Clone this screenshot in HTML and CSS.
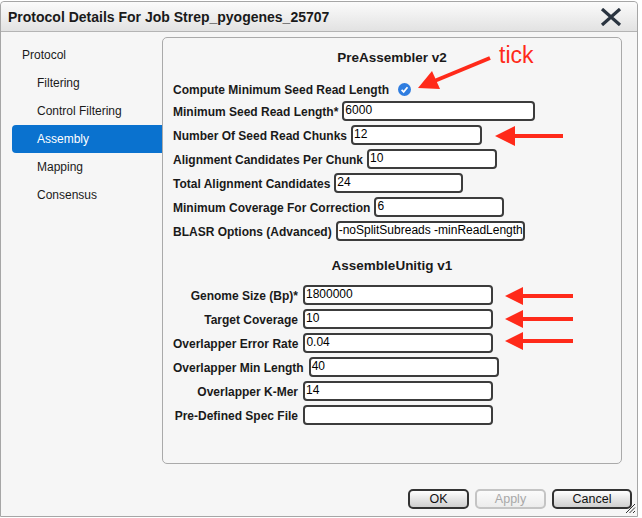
FILE: index.html
```html
<!DOCTYPE html>
<html>
<head>
<meta charset="utf-8">
<link rel="stylesheet" href="styles.css">
</head>
<body>
<div class="window">
  <div class="titlebar">
    <span class="title">Protocol Details For Job Strep_pyogenes_25707</span>
    <svg class="close" width="22" height="18" viewBox="0 0 22 18"><path d="M2 1 L20 17 M20 1 L2 17" stroke="#2a3440" stroke-width="3.2" stroke-linecap="butt"/></svg>
  </div>
  <div class="main">
    <ul class="sidebar">
      <li class="top">Protocol</li>
      <li>Filtering</li>
      <li>Control Filtering</li>
      <li class="selected">Assembly</li>
      <li>Mapping</li>
      <li>Consensus</li>
    </ul>
    <div class="panel">
      <div class="heading">PreAssembler v2</div>
      <div class="row first">
        <span class="label">Compute Minimum Seed Read Length</span>
        <span class="check"><svg width="13" height="13" viewBox="0 0 13 13"><circle cx="6.5" cy="6.5" r="6.5" fill="#2f7de0"/><path d="M3.6 6.8 L5.7 8.9 L9.5 4.3" fill="none" stroke="#fff" stroke-width="1.7"/></svg></span>
      </div>
      <div class="row"><span class="label">Minimum Seed Read Length*</span><span class="input w193">6000</span></div>
      <div class="row"><span class="label">Number Of Seed Read Chunks</span><span class="input w131">12</span></div>
      <div class="row"><span class="label">Alignment Candidates Per Chunk</span><span class="input w130">10</span></div>
      <div class="row"><span class="label">Total Alignment Candidates</span><span class="input w129">24</span></div>
      <div class="row"><span class="label">Minimum Coverage For Correction</span><span class="input w130">6</span></div>
      <div class="row"><span class="label">BLASR Options (Advanced)</span><span class="input w189">-noSplitSubreads -minReadLength</span></div>

      <div class="heading second">AssembleUnitig v1</div>
      <div class="grid">
        <div class="row"><span class="label right">Genome Size (Bp)*</span><span class="input w190">1800000</span></div>
        <div class="row"><span class="label right">Target Coverage</span><span class="input w190">10</span></div>
        <div class="row"><span class="label right">Overlapper Error Rate</span><span class="input w190">0.04</span></div>
        <div class="row"><span class="label right">Overlapper Min Length</span><span class="input w190">40</span></div>
        <div class="row"><span class="label right">Overlapper K-Mer</span><span class="input w190">14</span></div>
        <div class="row"><span class="label right">Pre-Defined Spec File</span><span class="input w190"></span></div>
      </div>
    </div>
  </div>
  <div class="footer">
    <button class="btn ok">OK</button>
    <button class="btn apply" disabled>Apply</button>
    <button class="btn cancel">Cancel</button>
  </div>
  <svg class="grip" width="12" height="12" viewBox="0 0 12 12"><path d="M11 2 L2 11 M11 5.5 L5.5 11 M11 9 L9 11" stroke="#333" stroke-width="1"/></svg>
  <div class="annot">
    <span class="tick">tick</span>
    <svg width="638" height="516" viewBox="0 0 638 516">
      <g stroke="#ff2a1a" stroke-width="4" fill="#ff2a1a">
        <line x1="490" y1="57" x2="432" y2="81"/>
        <polygon points="418,87 432,70 440,88" stroke="none"/>
        <line x1="563" y1="135" x2="512" y2="135"/>
        <polygon points="495,135 515,125 515,145" stroke="none"/>
        <line x1="573" y1="295" x2="520" y2="295"/>
        <polygon points="505,295 523,286 523,304" stroke="none"/>
        <line x1="573" y1="318" x2="520" y2="318"/>
        <polygon points="505,318 523,309 523,327" stroke="none"/>
        <line x1="573" y1="340" x2="520" y2="340"/>
        <polygon points="505,340 523,331 523,349" stroke="none"/>
      </g>
    </svg>
  </div>
</div>
</body>
</html>
```

FILE: styles.css
```css
* { box-sizing: border-box; }
html, body { margin: 0; padding: 0; background: #ffffff; }
body { font-family: "Liberation Sans", Arial, sans-serif; font-size: 12px; color: #111; }

.window {
  position: relative;
  margin-top: 1px;
  width: 638px;
  height: 516px;
  background: #f6f6f6;
  border: 1px solid #a6a6a6;
  border-radius: 4px 4px 0 0;
  display: flex;
  flex-direction: column;
}

.titlebar {
  height: 30px;
  flex: none;
  display: flex;
  align-items: center;
  justify-content: space-between;
  padding: 1px 15px 0 7px;
  background: linear-gradient(#fbfbfb, #e2e2e2);
  border-bottom: 1px solid #b4b4b4;
  border-radius: 4px 4px 0 0;
}
.title { font-weight: bold; font-size: 14px; color: #1a1a1a; }
.close { display: block; }

.main {
  display: flex;
  padding-top: 5px;
  flex: none;
}

.sidebar {
  list-style: none;
  margin: 4px 0 0 11px;
  padding: 0;
  width: 150px;
  flex: none;
}
.sidebar li {
  height: 28px;
  line-height: 28px;
  padding-left: 25px;
  color: #1a1a1a;
}
.sidebar li.top { padding-left: 10px; }
.sidebar li.selected {
  background: #0a72cf;
  color: #fff;
  border-radius: 4px 0 0 4px;
}

.panel {
  width: 460px;
  height: 427px;
  border: 1px solid #aaaaaa;
  border-radius: 5px;
  padding: 10px 10px 0 10px;
}

.heading {
  text-align: center;
  font-weight: bold;
  font-size: 13.5px;
  line-height: 20px;
  margin-bottom: 11px;
  color: #1a1a1a;
}
.heading.second { margin-top: 15px; margin-bottom: 9px; }

.row {
  display: flex;
  align-items: center;
  height: 20px;
  margin-bottom: 4px;
}
.row.first { margin-bottom: 2px; }

.label {
  font-weight: bold;
  font-size: 12px;
  color: #1a1a1a;
  margin-right: 4px;
  white-space: nowrap;
  padding-top: 2px;
}
.label.right {
  min-width: 125px;
  text-align: right;
  margin-right: 5px;
}

.check { display: flex; margin-left: 5px; }

.input {
  display: block;
  height: 20px;
  background: #fff;
  border: 2px solid #3c3c3c;
  border-radius: 4px;
  padding: 0 1px;
  font-size: 12px;
  line-height: 14px;
  color: #000;
  white-space: nowrap;
  overflow: hidden;
}
.w193 { width: 193px; }
.w131 { width: 131px; }
.w130 { width: 130px; }
.w129 { width: 129px; }
.w189 { width: 189px; }
.w190 { width: 190px; }

.footer {
  display: flex;
  justify-content: flex-end;
  gap: 6px;
  padding: 25px 5px 0 0;
}
.btn {
  height: 20px;
  border: 2px solid #333;
  border-radius: 5px;
  background: linear-gradient(#ffffff, #e6e6e6 50%, #cfcfcf);
  font-family: "Liberation Sans", Arial, sans-serif;
  font-size: 12.5px;
  color: #111;
  padding: 0;
  line-height: 16px;
}
.btn.ok { width: 61px; }
.btn.apply { width: 71px; border-color: #c4c4c4; color: #a8a8a8; background: linear-gradient(#fbfbfb, #ececec); }
.btn.cancel { width: 80px; }

.grip { position: absolute; right: 1px; bottom: 2px; }

.annot { position: absolute; left: -1px; top: -1px; width: 638px; height: 516px; pointer-events: none; }
.annot svg { position: absolute; left: 0; top: 0; }
.tick {
  position: absolute;
  left: 499px;
  top: 41px;
  font-size: 23px;
  color: #ff2a1a;
  font-family: "Liberation Sans", Arial, sans-serif;
}
```
